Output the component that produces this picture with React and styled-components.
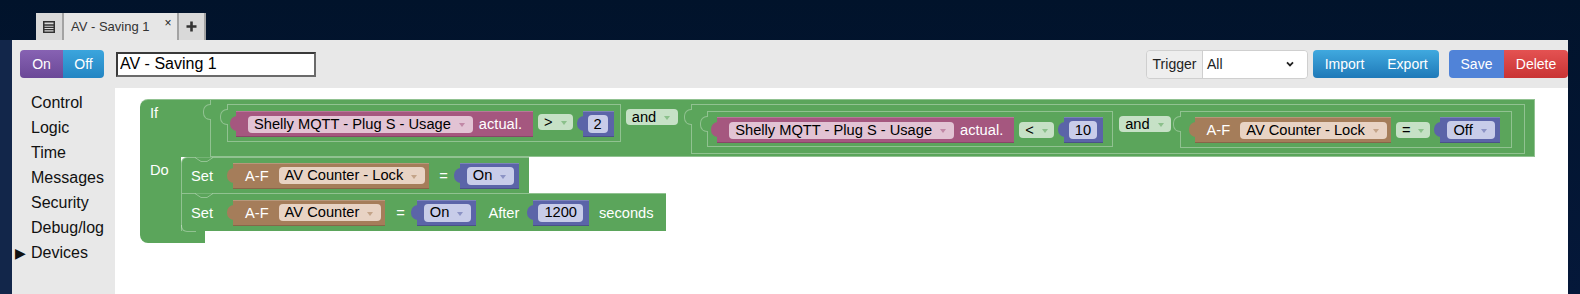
import React from 'react';
import styled, { createGlobalStyle } from 'styled-components';

const GREEN = '#5ba55b';
const LINE = 'rgba(255,255,255,0.33)';
const FONT = '"Liberation Sans", Arial, sans-serif';

const COL = {
  green: { c: '#5ba55b', f: '#c6e1c6' },
  pink: { c: '#a5577f', f: '#e2c3d4' },
  brown: { c: '#a57d5a', f: '#e8d3c4' },
  blue: { c: '#5b64a8', f: '#c8cce9' },
};

const Global = createGlobalStyle`
  html, body { margin: 0; padding: 0; }
  body { background: #061833; font-family: ${FONT}; }
`;

const Page = styled.div`
  width: 1580px;
  height: 294px;
  overflow: hidden;
  background: linear-gradient(180deg, #01132b 0%, #05183a 100%);
  display: flex;
  flex-direction: column;
`;

const TabBar = styled.div`
  display: flex;
  height: 27px;
  margin-top: 13px;
  padding-left: 36px;
`;

const Tab = styled.div`
  display: flex;
  align-items: center;
  box-sizing: border-box;
  width: ${p => p.$w}px;
  background: ${p => (p.$active ? '#e6e6e6' : '#d9d9d9')};
  border-right: 2px solid #a3a3a3;
  color: #333;
  font-size: 13px;
  padding: ${p => (p.$active ? '0 0 0 7px' : '0')};
  justify-content: ${p => (p.$active ? 'flex-start' : 'center')};
`;

const TabClose = styled.span`
  font-size: 12px;
  margin-left: 15px;
  margin-top: -7px;
  color: #222;
`;

const Panel = styled.div`
  flex: 1;
  margin: 0 12px;
  background: #e8e8e8;
  display: flex;
  flex-direction: column;
  box-shadow: -12px 0 0 0 #12264a;
`;

const Toolbar = styled.div`
  height: 48px;
  display: flex;
  align-items: center;
  padding-left: 8px;
  box-sizing: border-box;
`;

const BtnGroup = styled.div`
  display: flex;
  height: ${p => p.$h || 28}px;
  margin-left: ${p => p.$ml || 0}px;
  border-radius: 4px;
  overflow: hidden;
`;

const Btn = styled.button`
  border: none;
  margin: 0;
  width: ${p => p.$w}px;
  padding: 0;
  font-family: ${FONT};
  font-size: 14px;
  color: #fff;
  background: ${p => p.$bg};
  cursor: pointer;
`;

const NameInput = styled.input`
  margin-left: 12px;
  width: 200px;
  height: 25px;
  box-sizing: border-box;
  border: 2px solid #3a3a3a;
  border-right-color: #6a6a6a;
  border-bottom-color: #6a6a6a;
  padding: 0 2px;
  font-family: ${FONT};
  font-size: 16px;
  color: #000;
  background: #fff;
  outline: none;
`;

const Spacer = styled.div`
  flex: 1;
`;

const TriggerGroup = styled.div`
  display: flex;
  height: 29px;
  border: 1px solid #cfcfcf;
  border-radius: 4px;
  box-sizing: border-box;
  overflow: hidden;
  font-size: 14px;
  color: #222;
`;

const TriggerLabel = styled.span`
  width: 55px;
  background: #eeeeee;
  border-right: 1px solid #cfcfcf;
  display: flex;
  align-items: center;
  justify-content: center;
`;

const TriggerSelect = styled.div`
  width: 104px;
  background: #fff;
  display: flex;
  align-items: center;
  justify-content: space-between;
  padding: 0 13px 0 4px;
  box-sizing: border-box;
`;

const Body = styled.div`
  flex: 1;
  display: flex;
  min-height: 0;
`;

const Sidebar = styled.ul`
  width: 103px;
  margin: 0;
  padding: 2px 0 0 0;
  list-style: none;
  font-size: 16px;
  color: #111;
`;

const Cat = styled.li`
  display: flex;
  height: 25px;
  align-items: center;
`;

const Marker = styled.span`
  width: 19px;
  box-sizing: border-box;
  padding-left: 3px;
  font-size: 14px;
`;

const Workspace = styled.div`
  flex: 1;
  background: #fff;
  padding: 11px 0 0 25px;
  overflow: hidden;
`;

/* ---------- Blockly-like blocks ---------- */

const IfBlock = styled.div`
  display: inline-flex;
  flex-direction: column;
  align-items: flex-start;
`;

const IfTop = styled.div`
  display: flex;
  background: ${GREEN};
  border-radius: 8px 0 0 0;
  border-top: 1px solid ${LINE};
`;

const Label = styled.span`
  color: #fff;
  font-size: 14.67px;
  white-space: nowrap;
  margin-left: ${p => p.$ml || 0}px;
  margin-top: ${p => p.$mt || 0}px;
`;

const IfHead = styled.div`
  width: 70px;
  box-sizing: border-box;
  padding: 4px 0 0 10px;
`;

const Nest = styled.div`
  position: relative;
  display: flex;
  align-items: flex-start;
  flex: none;
  box-sizing: border-box;
  background: ${GREEN};
  border: 1px solid ${LINE};
  height: ${p => p.$h}px;
  padding: ${p => p.$pad};
  margin-left: ${p => p.$ml || 0}px;
  margin-top: ${p => p.$mt || 0}px;
  &::before {
    content: '';
    position: absolute;
    left: -8px;
    top: 4px;
    width: 7px;
    height: 14px;
    border: 1px solid ${LINE};
    border-right: none;
    border-radius: 7px 0 0 7px;
    background: ${GREEN};
  }
`;

const VBlock = styled.div`
  position: relative;
  display: flex;
  align-items: center;
  flex: none;
  box-sizing: border-box;
  height: 26px;
  padding: 0 ${p => p.$pr ?? 5}px 0 ${p => p.$pl ?? 6}px;
  gap: ${p => p.$gap ?? 6}px;
  background: ${p => p.$c};
  margin-left: ${p => p.$ml || 0}px;
  margin-top: ${p => p.$mt || 0}px;
  border-top: 1px solid rgba(255, 255, 255, 0.2);
  border-bottom: 1px solid rgba(0, 0, 0, 0.18);
  &::before {
    content: '';
    position: absolute;
    left: -6px;
    top: 4px;
    width: 7px;
    height: 15px;
    background: ${p => p.$c};
    border-radius: 7px 0 0 7px;
  }
`;

const Field = styled.span`
  display: inline-flex;
  align-items: center;
  flex: none;
  box-sizing: border-box;
  height: ${p => p.$h || 17}px;
  padding: 0 ${p => p.$pr ?? 8}px 0 ${p => p.$pl ?? 6}px;
  border-radius: 4px;
  background: ${p => p.$bg};
  color: #000;
  font-size: 14.67px;
  line-height: 1;
  white-space: nowrap;
  margin-left: ${p => p.$ml || 0}px;
  margin-top: ${p => p.$mt || 0}px;
`;

const Arrow = styled.span`
  display: inline-block;
  width: 0;
  height: 0;
  margin-left: 8px;
  margin-top: 2px;
  border-left: 3px solid transparent;
  border-right: 3px solid transparent;
  border-top: 4px solid ${p => p.$c};
  opacity: 0.55;
`;

const IfMid = styled.div`
  display: flex;
  background: ${GREEN};
`;

const Arm = styled.div`
  width: 41px;
  box-sizing: border-box;
  padding: 4px 0 0 10px;
`;

const Stmts = styled.div`
  display: flex;
  flex-direction: column;
  align-items: flex-start;
  background: #fff;
`;

const Stmt = styled.div`
  position: relative;
  display: flex;
  align-items: center;
  box-sizing: border-box;
  height: ${p => p.$h}px;
  padding: 0 ${p => p.$pr}px 0 9px;
  background: ${GREEN};
  border-top: 1px solid ${LINE};
  border-left: 1px solid ${LINE};
  border-radius: ${p => (p.$first ? '6px 0 0 0' : '0')};
`;

const NotchSvg = styled.svg`
  position: absolute;
  top: -1px;
  left: 13px;
`;

const IfFoot = styled.div`
  position: relative;
  width: 65px;
  height: 12px;
  background: ${GREEN};
  border-radius: 0 0 0 8px;
  &::before {
    content: '';
    position: absolute;
    left: 41px;
    top: -6px;
    width: 14px;
    height: 6px;
    border-left: 1px solid ${LINE};
    border-bottom: 1px solid ${LINE};
    border-radius: 0 0 0 6px;
  }
`;

const Notch = () => (
  <NotchSvg width="20" height="6" viewBox="0 0 20 6">
    <path d="M0 0.5 L6 4.5 H12 L18 0.5" fill={GREEN} stroke="rgba(255,255,255,0.35)" />
  </NotchSvg>
);

const Dd = ({ col, children, ...rest }) => (
  <Field $bg={COL[col].f} {...rest}>
    {children}
    <Arrow $c={COL[col].c} />
  </Field>
);

const Op = ({ children, ml = 5, mt = 5 }) => (
  <Dd col="green" $h={16} $ml={ml} $mt={mt} $pr={6}>{children}</Dd>
);

const Device = ({ name, ml, mt }) => (
  <VBlock $c={COL.pink.c} $pl={12} $pr={11} $ml={ml} $mt={mt}>
    <Dd col="pink">{name}</Dd>
    <Label>actual.</Label>
  </VBlock>
);

const Num = ({ v, ml, mt }) => (
  <VBlock $c={COL.blue.c} $pl={5} $pr={6} $ml={ml} $mt={mt}>
    <Field $bg={COL.blue.f} $h={18} $pl={6} $pr={6}>{v}</Field>
  </VBlock>
);

const Enum = ({ v, ml, mt }) => (
  <VBlock $c={COL.blue.c} $pl={7} $pr={5} $ml={ml} $mt={mt}>
    <Dd col="blue" $h={18}>{v}</Dd>
  </VBlock>
);

const Var = ({ name, ml, mt }) => (
  <VBlock $c={COL.brown.c} $pl={12} $pr={4} $gap={10} $ml={ml} $mt={mt}>
    <Label>A-F</Label>
    <Dd col="brown">{name}</Dd>
  </VBlock>
);

const MenuIcon = () => (
  <svg width="12" height="12" viewBox="0 0 12 12">
    <rect x="0.75" y="0.75" width="10.5" height="10.5" fill="none" stroke="#333" strokeWidth="1.5" />
    <path d="M1 4H11M1 6.3H11M1 8.6H11" stroke="#333" strokeWidth="1.3" />
  </svg>
);

const PlusIcon = () => (
  <svg width="11" height="11" viewBox="0 0 11 11">
    <path d="M5.5 0.5V10.5M0.5 5.5H10.5" stroke="#333" strokeWidth="2.6" />
  </svg>
);

const Chevron = () => (
  <svg width="8" height="6" viewBox="0 0 8 6">
    <path d="M1 1.3L4 4.4L7 1.3" fill="none" stroke="#222" strokeWidth="1.8" />
  </svg>
);

const categories = ['Control', 'Logic', 'Time', 'Messages', 'Security', 'Debug/log', 'Devices'];

export default function App() {
  return (
    <>
      <Global />
      <Page>
        <TabBar>
          <Tab $w={28}><MenuIcon /></Tab>
          <Tab $w={115} $active>
            AV - Saving 1<TabClose>×</TabClose>
          </Tab>
          <Tab $w={27}><PlusIcon /></Tab>
        </TabBar>
        <Panel>
          <Toolbar>
            <BtnGroup>
              <Btn $w={43} $bg="linear-gradient(#8762b3, #6b4897)">On</Btn>
              <Btn $w={41} $bg="linear-gradient(#3ba5dd, #2385c3)">Off</Btn>
            </BtnGroup>
            <NameInput defaultValue="AV - Saving 1" />
            <Spacer />
            <TriggerGroup>
              <TriggerLabel>Trigger</TriggerLabel>
              <TriggerSelect>
                <span>All</span>
                <Chevron />
              </TriggerSelect>
            </TriggerGroup>
            <BtnGroup $ml={5}>
              <Btn $w={63} $bg="linear-gradient(#40a9df, #1f79b8)">Import</Btn>
              <Btn $w={63} $bg="linear-gradient(#40a9df, #1f79b8)">Export</Btn>
            </BtnGroup>
            <BtnGroup $ml={10}>
              <Btn $w={55} $bg="#5083d8">Save</Btn>
              <Btn $w={64} $bg="linear-gradient(#e45252, #c93434)">Delete</Btn>
            </BtnGroup>
          </Toolbar>
          <Body>
            <Sidebar>
              {categories.map(c => (
                <Cat key={c}>
                  <Marker>{c === 'Devices' ? '▶' : ''}</Marker>
                  {c}
                </Cat>
              ))}
            </Sidebar>
            <Workspace>
              <IfBlock>
                <IfTop>
                  <IfHead><Label>If</Label></IfHead>
                  <Nest $h={58} $pad="4px 9px 0 16px" style={{ marginTop: -1 }}>
                    <Nest $h={38} $pad="6px 6px 0 8px">
                      <Device name="Shelly MQTT - Plug S - Usage" />
                      <Op mt={3}>&gt;</Op>
                      <Num v="2" ml={10} />
                    </Nest>
                    <Dd col="green" $h={16} $ml={5} $mt={5}>and</Dd>
                    <Nest $h={50} $ml={13} $pad="6px 12px 0 15px">
                      <Nest $h={36} $pad="5px 9px 0 9px">
                        <Device name="Shelly MQTT - Plug S - Usage" />
                        <Op>&lt;</Op>
                        <Num v="10" ml={10} />
                      </Nest>
                      <Dd col="green" $h={16} $ml={6} $mt={5} $pr={7}>and</Dd>
                      <Nest $h={37} $ml={9} $pad="5px 11px 0 14px">
                        <Var name="AV Counter - Lock" />
                        <Op>=</Op>
                        <Enum v="Off" ml={10} />
                      </Nest>
                    </Nest>
                  </Nest>
                </IfTop>
                <IfMid>
                  <Arm><Label $mt={2}>Do</Label></Arm>
                  <Stmts>
                    <Stmt $h={36} $pr={10} $first>
                      <Notch />
                      <Label>Set</Label>
                      <Var name="AV Counter - Lock" ml={20} />
                      <Label $ml={10}>=</Label>
                      <Enum v="On" ml={12} />
                    </Stmt>
                    <Stmt $h={38} $pr={12}>
                      <Notch />
                      <Label>Set</Label>
                      <Var name="AV Counter" ml={20} />
                      <Label $ml={11}>=</Label>
                      <Enum v="On" ml={12} />
                      <Label $ml={12}>After</Label>
                      <Num v="1200" ml={14} />
                      <Label $ml={10}>seconds</Label>
                    </Stmt>
                  </Stmts>
                </IfMid>
                <IfFoot />
              </IfBlock>
            </Workspace>
          </Body>
        </Panel>
      </Page>
    </>
  );
}
